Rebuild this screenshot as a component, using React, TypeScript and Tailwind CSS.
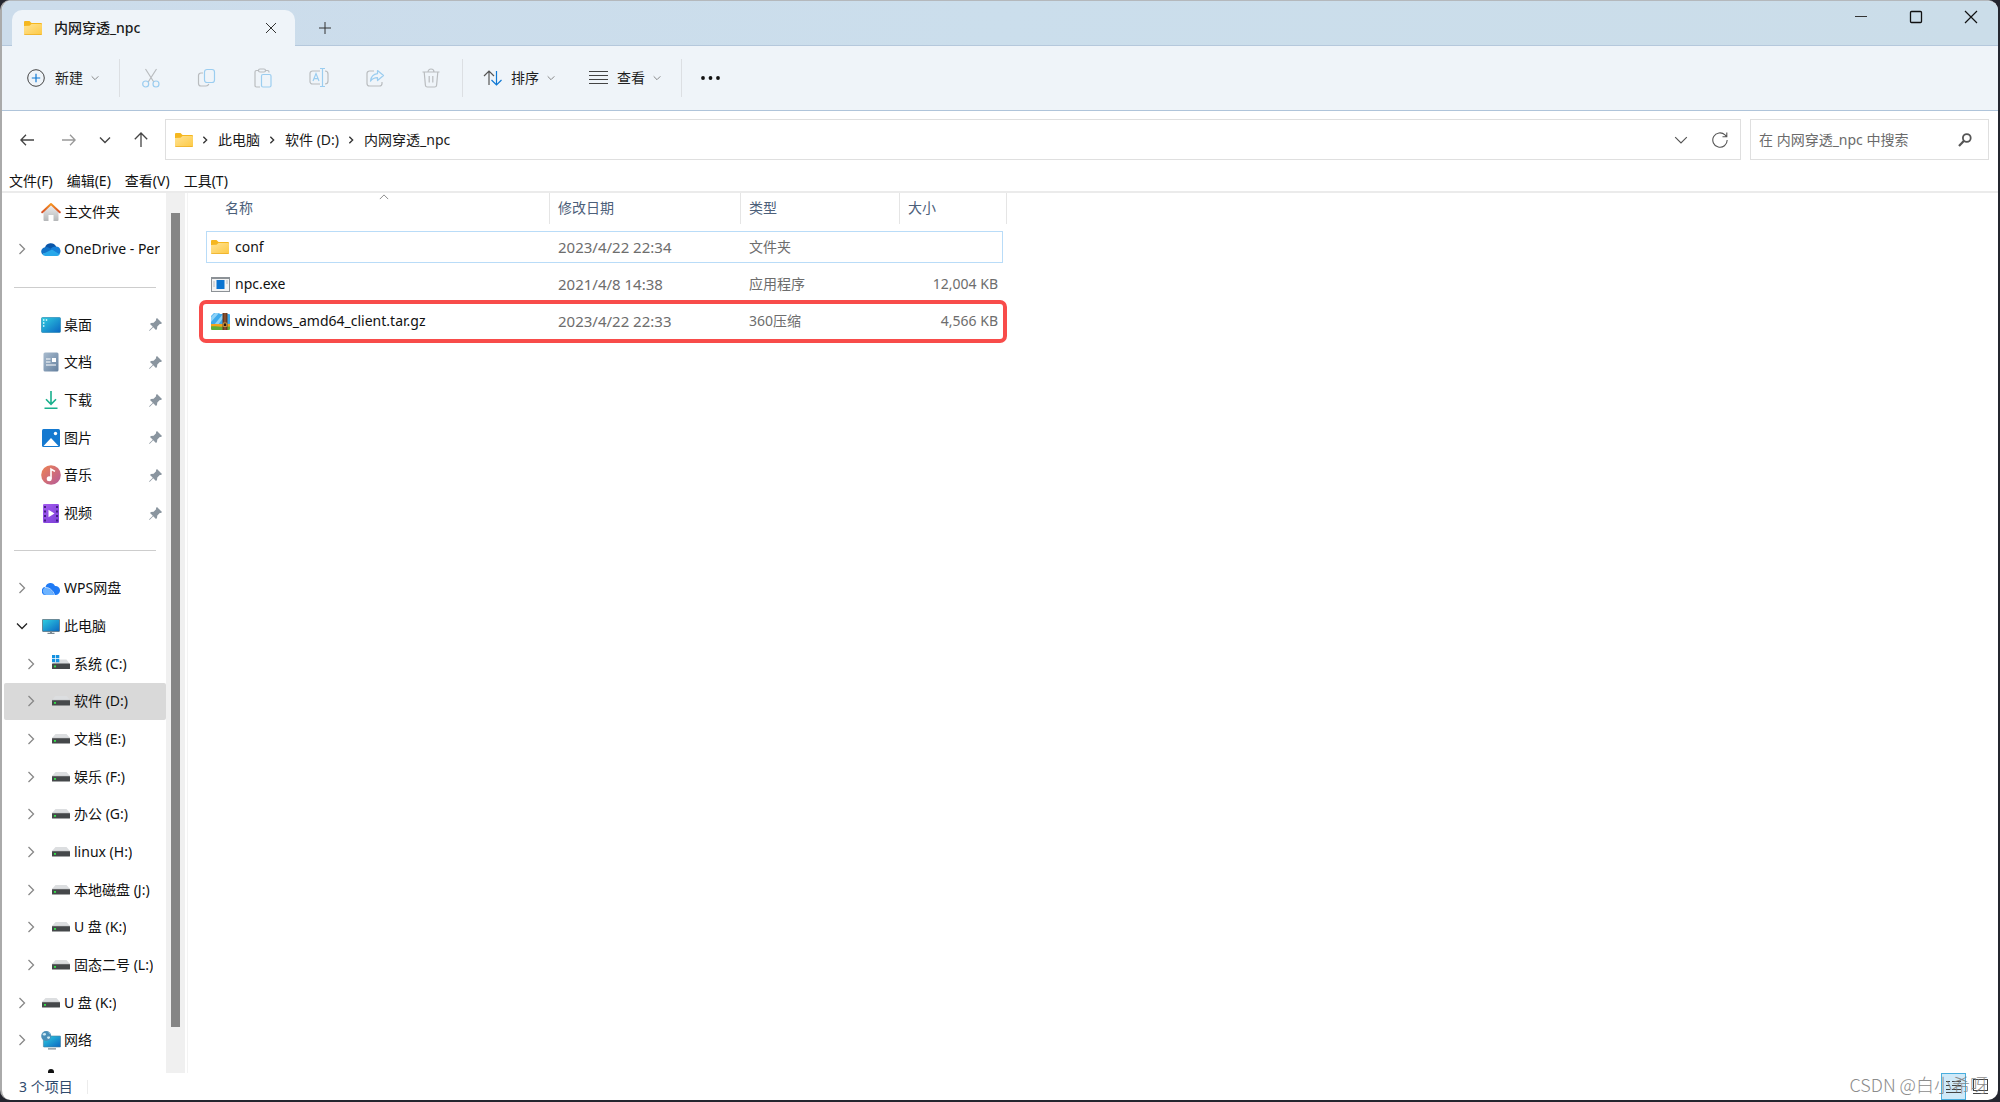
import React from 'react';

type IconType = React.ComponentType<{ className?: string }>;

const FolderIcon: IconType = ({ className }) => (
    <svg viewBox="0 0 18 14" className={className || 'w-[18px] h-[14px] shrink-0'}>
        <defs>
            <linearGradient id="folder" x1="0" y1="0" x2="1" y2="1">
                <stop offset="0" stopColor="#ffe394" />
                <stop offset="1" stopColor="#fdc944" />
            </linearGradient>
        </defs>
        <path d="M0 1a1 1 0 0 1 1-1h4.500l2 2H17a1 1 0 0 1 1 1v9H0z" fill="#f5b71f" />
        <path d="M0 5l5.500-.2 2-1.800H17a1 1 0 0 1 1 1v9a1 1 0 0 1-1 1H1a1 1 0 0 1-1-1z" fill="url(#folder)" />
        <path d="M.3 13.600h17.400" stroke="#e9a91b" strokeWidth=".7" />
    </svg>
);

const HomeIcon: IconType = () => (
    <svg viewBox="0 0 20 20" className="w-5 h-5">
        <defs>
            <linearGradient id="wall" x1="0" y1="0" x2="0" y2="1">
                <stop offset="0" stopColor="#f0f0f0" />
                <stop offset="1" stopColor="#b4b6b8" />
            </linearGradient>
            <linearGradient id="roof" x1="0" y1="0" x2="0" y2="1">
                <stop offset="0" stopColor="#f7941e" />
                <stop offset="1" stopColor="#d6502a" />
            </linearGradient>
        </defs>
        <path d="M2.500 9.500L10 2.800l7.500 6.700V18a1 1 0 0 1-1 1H12.500v-6h-5v6h-4a1 1 0 0 1-1-1z" fill="url(#wall)" />
        <path d="M1.200 10.300L10 2l8.800 8.300" fill="none" stroke="url(#roof)" strokeWidth="2" strokeLinecap="round" strokeLinejoin="round" />
    </svg>
);

const OneDriveIcon: IconType = () => (
    <svg viewBox="0 0 20 14" className="w-5 h-[14px]">
        <path d="M4 5.500A6 6 0 0 1 15 4.300a5 5 0 0 1-1 4L4 12A4 4 0 0 1 4 5.500z" fill="#0a55a8" />
        <path d="M15 4.500a4.600 4.600 0 0 1 2.500 8.400L9 7.500a7 7 0 0 1 6-3z" fill="#1680d8" />
        <path d="M4.200 5.200a4.300 4.300 0 0 0-3 7L12 8 8 5.700a6 6 0 0 0-3.800-.5z" fill="#1273c8" />
        <path d="M1.200 12.200a4 4 0 0 0 3.300 1.700h11.700a3.600 3.600 0 0 0 2.600-1.400L11 7.400z" fill="#28a8ea" />
    </svg>
);

const DesktopIcon: IconType = () => (
    <svg viewBox="0 0 20 16" className="w-5 h-4">
        <defs>
            <linearGradient id="screen" x1="0" y1="0" x2="1" y2="1">
                <stop offset="0" stopColor="#30cfe0" />
                <stop offset="1" stopColor="#0a66c2" />
            </linearGradient>
        </defs>
        <rect x=".5" y=".5" width="19" height="15" rx="1" fill="url(#screen)" stroke="#1b7fae" strokeWidth=".6" />
        <path d="M2 3h1.400M2 6h1.400M4.800 3h1.400M2 9h1.400" stroke="#e9fbff" strokeWidth="1.300" />
    </svg>
);

const DocumentIcon: IconType = () => (
    <svg viewBox="0 0 16 20" className="w-4 h-5">
        <defs>
            <linearGradient id="doc" x1="0" y1="0" x2="1" y2="1">
                <stop offset="0" stopColor="#a9bccf" />
                <stop offset="1" stopColor="#64809e" />
            </linearGradient>
        </defs>
        <rect x=".5" y=".5" width="15" height="19" rx="1.500" fill="url(#doc)" />
        <path d="M3 7h4.500M3 10h4.500M3 13h10" stroke="#fff" strokeWidth="1.200" />
        <rect x="9" y="6" width="4" height="4" fill="#fff" />
    </svg>
);

const DownloadIcon: IconType = () => (
    <svg viewBox="0 0 14 18" className="w-[14px] h-[18px]" fill="none" stroke="#18b08d" strokeWidth="1.600">
        <path d="M7 0v13M2 8.300l5 5 5-5M.500 17.200h13" />
    </svg>
);

const PictureIcon: IconType = () => (
    <svg viewBox="0 0 18 18" className="w-[18px] h-[18px]">
        <rect width="18" height="18" rx="1.500" fill="#1479d0" />
        <path d="M1.500 17L9 9l7.500 8z" fill="#fff" />
        <circle cx="13.500" cy="4.500" r="1.700" fill="#fff" />
    </svg>
);

const MusicIcon: IconType = () => (
    <svg viewBox="0 0 20 20" className="w-5 h-5">
        <defs>
            <linearGradient id="music" x1="0" y1="0" x2="1" y2="1">
                <stop offset="0" stopColor="#ef8350" />
                <stop offset="1" stopColor="#b45a9c" />
            </linearGradient>
        </defs>
        <circle cx="10" cy="10" r="9.800" fill="url(#music)" />
        <circle cx="8.200" cy="13.700" r="2.500" fill="#fff" />
        <path d="M10 13.700V4.200l4 2.200" fill="none" stroke="#fff" strokeWidth="1.600" />
    </svg>
);

const VideoIcon: IconType = () => (
    <svg viewBox="0 0 16 19" className="w-4 h-[19px]">
        <defs>
            <linearGradient id="video" x1="0" y1="0" x2="1" y2="1">
                <stop offset="0" stopColor="#a55cf0" />
                <stop offset="1" stopColor="#7a3ed6" />
            </linearGradient>
        </defs>
        <rect width="16" height="19" rx="1.200" fill="url(#video)" />
        <path d="M2 2v16M14 2v16" stroke="#3a1a78" strokeWidth="1.800" strokeDasharray="2 2.500" />
        <path d="M5.500 5.800l6 3.700-6 3.700z" fill="#fff" />
    </svg>
);

const WpsCloudIcon: IconType = () => (
    <svg viewBox="0 0 18 13" className="w-[18px] h-[13px]">
        <path d="M3.500 5A5 5 0 0 1 13 4a4.500 4.500 0 0 1 1 9H4A4 4 0 0 1 3.500 5z" fill="#1f7af5" />
        <path d="M3 5.500A4 4 0 0 0 4 13h8C10.500 9 7 5.500 3 5.500z" fill="#6db3ff" />
        <path d="M3 5.500C6.500 5 11 8 12.500 13" fill="none" stroke="#e4f1ff" strokeWidth=".8" />
    </svg>
);

const ComputerIcon: IconType = () => (
    <svg viewBox="0 0 18 15" className="w-[18px] h-[15px]">
        <rect x=".4" y=".4" width="17.200" height="12" rx=".6" fill="url(#screen)" stroke="#5a6b76" strokeWidth=".8" />
        <path d="M8 12.500h2v1.300H8zM5.500 13.800h7V15h-7z" fill="#7c8a93" />
    </svg>
);

const DriveIcon: IconType = () => (
    <svg viewBox="0 0 18 10" className="w-[18px] h-[10px]">
        <path d="M3.500 0h11L18 4H0z" fill="#dcdee0" />
        <rect y="4" width="18" height="5.600" rx=".5" fill="#45484a" />
        <path d="M0 4.400h18" stroke="#77797b" strokeWidth=".7" />
        <rect x="2" y="6" width="2" height="1.800" fill="#35e04a" />
    </svg>
);

const SystemDriveIcon: IconType = () => (
    <svg viewBox="0 0 18 14" className="w-[18px] h-[14px] mb-1">
        <path d="M8 4.500h6.500L18 9H0z" fill="#dcdee0" />
        <rect y="8.500" width="18" height="5.500" rx=".5" fill="#45484a" />
        <rect x="2" y="10.500" width="2" height="1.800" fill="#35e04a" />
        <path d="M0 0h3.300v3.300H0zM4 0h3.300v3.300H4zM0 4h3.300v3.300H0zM4 4h3.300v3.300H4z" fill="#1591e0" />
    </svg>
);

const NetworkIcon: IconType = () => (
    <svg viewBox="0 0 20 19" className="w-5 h-[19px]">
        <rect x="2.400" y="5" width="17.200" height="11" rx=".6" fill="url(#screen)" stroke="#4c7f9a" strokeWidth=".6" />
        <path d="M7 17.300h8v1.200H7z" fill="#7c8a93" />
        <circle cx="5.200" cy="5" r="5" fill="#4a8fb8" />
        <path d="M1.500 3c2-2 4-1 3.500.5S2 5 1.500 3zM6 6c2-.8 3.500-.4 3 .8S6.500 9 6 6zM7 1c1.500.4 2 1.500 2.500 2.500" fill="#cfe9f2" />
    </svg>
);

const ExeIcon: IconType = () => (
    <svg viewBox="0 0 19 15" className="w-[19px] h-[15px] shrink-0">
        <rect x=".5" y=".5" width="18" height="14" fill="#f3f3f3" stroke="#8c9196" />
        <path d="M0 1h19" stroke="#8c9196" strokeWidth="2" />
        <path d="M2 5h2M2 7h2M2 9h2M15 4h2M15 6h2" stroke="#a5adb5" strokeWidth=".8" />
        <rect x="5.500" y="3" width="8" height="9" fill="#0a74d1" />
    </svg>
);

const ArchiveIcon: IconType = () => (
    <svg viewBox="0 0 19 17" className="w-[19px] h-[17px] shrink-0">
        <path d="M0 3l3-3h5l1 1h9a1 1 0 0 1 1 1v10H0z" fill="#3da9ec" />
        <path d="M0 4l4-4h4L0 9zM3 12L12 1h3L7 12z" fill="#8ed2f7" />
        <path d="M0 11h19v3H0z" fill="#f5a31d" />
        <path d="M0 13.500c4-1 8 1 19 0V16a1 1 0 0 1-1 1H1a1 1 0 0 1-1-1z" fill="#5fae3a" />
        <path d="M11.500 0h5v17h-5z" fill="#6b3a20" />
        <path d="M14 0v17" stroke="#a0623a" />
        <path d="M12.300 10h3.400v3.500h-3.400z" fill="#2d1a10" stroke="#e2b04a" strokeWidth=".8" />
    </svg>
);

const PinIcon: IconType = () => (
    <svg viewBox="0 0 13 13" className="w-[13px] h-[13px]" fill="#8a959f">
        <path d="M8 0l5 5-1 1-1.200-.1L8.300 8.400 8 11l-1 1-2.800-2.800L.8 12.800H.2v-.6L3.800 8.800 1 6l1-1 2.600-.2 2.500-2.600L7 1z" />
    </svg>
);

interface ChevronProps {
    dir: 'up' | 'down' | 'right';
    className: string;
    width?: number;
}

function Chevron({ dir, className, width = 1 }: ChevronProps) {
    const paths = { up: 'M1 8.500l5-5 5 5', down: 'M1 3.500l5 5 5-5', right: 'M3.500 1l5 5-5 5' };
    return (
        <svg viewBox="0 0 12 12" className={className} fill="none" stroke="currentColor" strokeWidth={width}>
            <path d={paths[dir]} />
        </svg>
    );
}

const Divider = () => <div className="w-px h-[38px] bg-[#dcdfe3]" />;

// Toolbar glyphs share a 20px box; grey is the shape, blue is the accent
const GREY = '#b9bcbf';
const BLUE = '#9bcdf0';

const TOOLS = [
    {
        label: '剪切',
        art: (
            <>
                <path d="M4.500 1l8.300 13M15.500 1L7.200 14" stroke={GREY} />
                <circle cx="4.700" cy="16" r="3" stroke={BLUE} />
                <circle cx="15" cy="16" r="3" stroke={BLUE} />
            </>
        )
    },
    {
        label: '复制',
        art: (
            <>
                <path d="M6 5H4a2.500 2.500 0 0 0-2.500 2.500v8A2.500 2.500 0 0 0 4 18h5a3 3 0 0 0 2.800-2" stroke={GREY} />
                <rect x="7.500" y="1.500" width="10" height="13" rx="2.500" stroke={BLUE} />
            </>
        )
    },
    {
        label: '粘贴',
        art: (
            <>
                <path d="M6 2.500H3.500A1.500 1.500 0 0 0 2 4v13.500A1.500 1.500 0 0 0 3.500 19H7M12 2.500h2.500A1.500 1.500 0 0 1 16 4v.5" stroke={GREY} />
                <rect x="5.500" y="1" width="7" height="3" rx="1.500" stroke={GREY} />
                <rect x="8.500" y="6.500" width="9.500" height="12.500" rx="1.500" stroke={BLUE} />
            </>
        )
    },
    {
        label: '重命名',
        art: (
            <>
                <path d="M11 3H3.500A2.500 2.500 0 0 0 1 5.500v8A2.500 2.500 0 0 0 3.500 16H11M16 3a3 3 0 0 1 3 3v7a3 3 0 0 1-3 3" stroke={GREY} />
                <path d="M4 13l3-7.500L10 13M5 10.700h4M11 .5h5M13.500 .5v18M11 18.500h5" stroke={BLUE} />
            </>
        )
    },
    {
        label: '共享',
        art: (
            <>
                <path d="M9 3H4.500A2.500 2.500 0 0 0 2 5.500v10A2.500 2.500 0 0 0 4.500 18h10a2.500 2.500 0 0 0 2.500-2.500V14" stroke={GREY} />
                <path d="M12.500 2.500l6 5-6 5V9.700c-3.500 0-5.200 1-7 3.500.4-4 2.500-7 7-7.500z" stroke={BLUE} strokeLinejoin="round" />
            </>
        )
    },
    {
        label: '删除',
        art: (
            <path d="M1.500 4h17M7 4a3 3 0 0 1 6 0M3.200 4l1.200 13.200A2 2 0 0 0 6.400 19h7.200a2 2 0 0 0 2-1.800L16.800 4M8.200 8v6.500M11.800 8v6.500" stroke={GREY} />
        )
    }
];

interface NavEntry {
    label?: string;
    icon?: IconType;
    expand?: 'right' | 'down';
    child?: boolean;
    pinned?: boolean;
    selected?: boolean;
}

const NAV: NavEntry[] = [
    { label: '主文件夹', icon: HomeIcon },
    { label: 'OneDrive - Per', icon: OneDriveIcon, expand: 'right' },
    {},
    { label: '桌面', icon: DesktopIcon, pinned: true },
    { label: '文档', icon: DocumentIcon, pinned: true },
    { label: '下载', icon: DownloadIcon, pinned: true },
    { label: '图片', icon: PictureIcon, pinned: true },
    { label: '音乐', icon: MusicIcon, pinned: true },
    { label: '视频', icon: VideoIcon, pinned: true },
    {},
    { label: 'WPS网盘', icon: WpsCloudIcon, expand: 'right' },
    { label: '此电脑', icon: ComputerIcon, expand: 'down' },
    { label: '系统 (C:)', icon: SystemDriveIcon, expand: 'right', child: true },
    { label: '软件 (D:)', icon: DriveIcon, expand: 'right', child: true, selected: true },
    { label: '文档 (E:)', icon: DriveIcon, expand: 'right', child: true },
    { label: '娱乐 (F:)', icon: DriveIcon, expand: 'right', child: true },
    { label: '办公 (G:)', icon: DriveIcon, expand: 'right', child: true },
    { label: 'linux (H:)', icon: DriveIcon, expand: 'right', child: true },
    { label: '本地磁盘 (J:)', icon: DriveIcon, expand: 'right', child: true },
    { label: 'U 盘 (K:)', icon: DriveIcon, expand: 'right', child: true },
    { label: '固态二号 (L:)', icon: DriveIcon, expand: 'right', child: true },
    { label: 'U 盘 (K:)', icon: DriveIcon, expand: 'right' },
    { label: '网络', icon: NetworkIcon, expand: 'right' }
];

const FILES = [
    { name: 'conf', icon: FolderIcon, date: '2023/4/22 22:34', type: '文件夹', size: '', focused: true },
    { name: 'npc.exe', icon: ExeIcon, date: '2021/4/8 14:38', type: '应用程序', size: '12,004 KB' },
    { name: 'windows_amd64_client.tar.gz', icon: ArchiveIcon, date: '2023/4/22 22:33', type: '360压缩', size: '4,566 KB', marked: true }
];

function TitleBar() {
    return (
        <header className="flex justify-between h-[45px] border-b border-[#b5c8dc] bg-linear-to-r from-[#ccdceb] via-[#cbdeec] to-[#cbdde9]">
            <div className="flex pl-[10px]">
                <div className="flex items-center h-9 mt-[9px] w-[283px] pl-3 pr-[18px] rounded-t-[10px] bg-[#eff4f9]">
                    <FolderIcon />
                    <span className="ml-3 mr-auto text-[#1a1a1a] font-medium">内网穿透_npc</span>
                    <button aria-label="关闭标签页">
                        <svg viewBox="0 0 12 12" className="w-3 h-3" stroke="#333" fill="none">
                            <path d="M1 1l10 10M11 1L1 11" />
                        </svg>
                    </button>
                </div>
                <button aria-label="新建标签页" className="self-center ml-6 mt-[9px]">
                    <svg viewBox="0 0 12 12" className="w-3 h-3" stroke="#333">
                        <path d="M6 0v12M0 6h12" />
                    </svg>
                </button>
            </div>
            <div className="flex gap-[41px] h-8 pr-5 items-center">
                <button aria-label="最小化">
                    <svg viewBox="0 0 14 14" className="w-[14px] h-[14px]" stroke="#333" fill="none">
                        <path d="M1 6.500h12" />
                    </svg>
                </button>
                <button aria-label="最大化">
                    <svg viewBox="0 0 14 14" className="w-[14px] h-[14px]" stroke="#111" fill="none" strokeWidth="1.300">
                        <rect x="1.500" y="1.500" width="11" height="11" rx="1" />
                    </svg>
                </button>
                <button aria-label="关闭">
                    <svg viewBox="0 0 14 14" className="w-[14px] h-[14px]" stroke="#111" fill="none" strokeWidth="1.200">
                        <path d="M1 1l12 12M13 1L1 13" />
                    </svg>
                </button>
            </div>
        </header>
    );
}

function Toolbar() {
    return (
        <div className="flex items-center h-[65px] pl-[25px] border-b border-[#afc4da] bg-[#eff4f9] text-[#1f1f1f]">
            <button className="flex items-center">
                <svg viewBox="0 0 18 18" className="w-[18px] h-[18px]" fill="none">
                    <circle cx="9" cy="9" r="8.300" stroke="#444" />
                    <path d="M9 4.800v8.400M4.800 9h8.400" stroke="#0f78d4" strokeWidth="1.200" />
                </svg>
                <span className="ml-[10px] mr-2">新建</span>
                <Chevron dir="down" className="w-2 h-2 text-[#777]" width={1.3} />
            </button>
            <div className="ml-5"><Divider /></div>
            <div className="flex gap-9 mx-[21px]">
                {TOOLS.map((tool) => (
                    <button key={tool.label} aria-label={tool.label} disabled>
                        <svg viewBox="0 0 20 20" className="w-5 h-5" fill="none" strokeWidth="1.200">
                            {tool.art}
                        </svg>
                    </button>
                ))}
            </div>
            <Divider />
            <button className="flex items-center ml-5">
                <svg viewBox="0 0 20 16" className="w-5 h-4" fill="none" strokeWidth="1.200">
                    <path d="M6 15V1.200M1 6l5-5 5 5" stroke="#555" />
                    <path d="M13.500 1v13.800M8.500 10l5 5 5-5" stroke="#0f78d4" />
                </svg>
                <span className="mx-2">排序</span>
                <Chevron dir="down" className="w-2 h-2 text-[#777]" width={1.3} />
            </button>
            <button className="flex items-center ml-[34px]">
                <svg viewBox="0 0 19 14" className="w-[19px] h-[14px]" stroke="#444">
                    <path d="M0 .5h19M0 4.500h19M0 8.500h19M0 12.500h19" />
                </svg>
                <span className="ml-[9px] mr-2">查看</span>
                <Chevron dir="down" className="w-2 h-2 text-[#777]" width={1.3} />
            </button>
            <div className="ml-5 mr-[19px]"><Divider /></div>
            <button aria-label="更多">
                <svg viewBox="0 0 19 4" className="w-[19px] h-1" fill="#111">
                    <circle cx="2" cy="2" r="1.900" />
                    <circle cx="9.500" cy="2" r="1.900" />
                    <circle cx="17" cy="2" r="1.900" />
                </svg>
            </button>
        </div>
    );
}

function AddressBar() {
    return (
        <div className="flex items-center h-[57px] pl-[18px] pr-[9px]">
            <div className="flex items-center">
                <button aria-label="后退">
                    <svg viewBox="0 0 14 12" className="w-[14px] h-3" fill="none" stroke="#444" strokeWidth="1.300">
                        <path d="M14 6H1M6 .8L.9 6 6 11.200" />
                    </svg>
                </button>
                <button aria-label="前进" className="ml-7">
                    <svg viewBox="0 0 14 12" className="w-[14px] h-3" fill="none" stroke="#999" strokeWidth="1.300">
                        <path d="M0 6h13M8 .8L13.100 6 8 11.200" />
                    </svg>
                </button>
                <button aria-label="最近" className="ml-[23px]">
                    <Chevron dir="down" className="w-3 h-3 text-[#444]" width={1.4} />
                </button>
                <button aria-label="向上" className="ml-[23px]">
                    <svg viewBox="0 0 14 15" className="w-[14px] h-[15px]" fill="none" stroke="#444" strokeWidth="1.300">
                        <path d="M7 15V1M.8 7.200L7 1l6.200 6.200" />
                    </svg>
                </button>
            </div>
            <nav className="flex flex-1 items-center h-[41px] ml-[17px] mr-[9px] pl-[9px] pr-3 border border-[#dfdfdf] text-[#1a1a1a]">
                <FolderIcon />
                {['此电脑', '软件 (D:)', '内网穿透_npc'].map((part) => (
                    <React.Fragment key={part}>
                        <Chevron dir="right" className="w-2 h-2 ml-2 mr-[9px] text-[#333]" width={2} />
                        <a href="#">{part}</a>
                    </React.Fragment>
                ))}
                <button aria-label="展开" className="ml-auto mr-6">
                    <Chevron dir="down" className="w-[14px] h-[14px] text-[#555]" />
                </button>
                <button aria-label="刷新">
                    <svg viewBox="0 0 16 16" className="w-4 h-4" fill="none" stroke="#555" strokeWidth="1.100">
                        <path d="M15.200 8A7.200 7.200 0 1 1 13 2.900L14.600 4.500M14.800 .5v4.200h-4.300" />
                    </svg>
                </button>
            </nav>
            <label className="flex items-center w-[239px] h-[41px] pl-2 pr-4 border border-[#dfdfdf]">
                <input
                    type="text"
                    aria-label="搜索"
                    placeholder="在 内网穿透_npc 中搜索"
                    className="flex-1 min-w-0 outline-none placeholder:text-[#6b6b6b]"
                />
                <svg viewBox="0 0 14 14" className="w-[14px] h-[14px]" fill="none" stroke="#555">
                    <circle cx="8.800" cy="5" r="3.900" strokeWidth="1.800" />
                    <path d="M6 7.800L1 13" strokeWidth="2.200" />
                </svg>
            </label>
        </div>
    );
}

function Sidebar() {
    return (
        <aside className="flex shrink-0 w-[186px] pr-[2px] border-r border-[#f3f3f3]">
            <ul className="flex flex-col flex-1 min-w-0 pl-[2px]">
                {NAV.map((item, idx) => {
                    if (!item.icon) {
                        return (
                            <li key={idx} className="flex flex-1 items-center min-h-0 pl-[10px] pr-[10px]">
                                <hr className="w-full border-[#cdcdcd]" />
                            </li>
                        );
                    }
                    const Icon = item.icon;
                    return (
                        <li key={idx} className="flex flex-1 min-h-0">
                            <button
                                className={`flex items-center w-full min-w-0 rounded-[2px] text-left whitespace-nowrap ${item.child ? 'pl-[21px]' : 'pl-3'} ${item.selected ? 'bg-[#d9d9d9]' : ''}`}
                            >
                                <span className="flex w-3 shrink-0">
                                    {item.expand && (
                                        <Chevron
                                            dir={item.expand}
                                            className={`w-3 h-3 ${item.expand === 'down' ? 'text-[#222]' : 'text-[#888]'}`}
                                            width={1.3}
                                        />
                                    )}
                                </span>
                                <span className={`flex justify-center shrink-0 w-5 mr-[3px] ${item.child ? 'ml-[14px]' : 'ml-[13px]'}`}>
                                    <Icon />
                                </span>
                                <span className="overflow-hidden">{item.label}</span>
                                {item.pinned && <span className="ml-auto mr-1"><PinIcon /></span>}
                            </button>
                        </li>
                    );
                })}
                <li className="h-[14px] pl-10 overflow-hidden">
                    <svg viewBox="0 0 14 14" className="w-[14px] h-[14px]">
                        <circle cx="7" cy="13" r="3" fill="#111" />
                    </svg>
                </li>
            </ul>
            <div className="w-[19px] pt-5 pb-[46px] px-[5px] bg-[#f0f0f0]">
                <div className="h-full bg-[#858585]" />
            </div>
        </aside>
    );
}

function FileTable() {
    const head = 'h-[31px] pl-2 pt-[5px] border-r border-[#e5e5e5]';
    return (
        <table className="table-fixed w-[801px] h-min text-left text-[#6d6d6d]">
            <thead>
            <tr className="h-[38px] align-top text-[#4c607a]">
                <th className="relative w-[344px] p-0 font-normal">
                    <div className="h-[31px] pl-[19px] pt-[5px] border-r border-[#e5e5e5]">名称</div>
                    <Chevron dir="up" className="absolute -top-px left-[173px] w-[10px] h-[10px] text-[#777]" />
                </th>
                <th className="w-[191px] p-0 font-normal"><div className={head}>修改日期</div></th>
                <th className="w-[159px] p-0 font-normal"><div className={head}>类型</div></th>
                <th className="p-0 font-normal"><div className={head}>大小</div></th>
            </tr>
            </thead>
            <tbody>
            {FILES.map((file) => {
                const Icon = file.icon;
                const cell = `flex items-center h-8 border-y ${file.focused ? 'border-[#b9dcf8]' : 'border-transparent'}`;
                return (
                    <tr key={file.name} className="relative h-[37px] align-top">
                        <td className="p-0">
                            <div className={`${cell} border-l pl-1 text-[#111]`}>
                                <span className="flex w-5 mr-1"><Icon /></span>
                                {file.name}
                            </div>
                            {file.marked && (
                                <div className="absolute -top-[5px] -bottom-px -left-[7px] right-0 border-4 border-[#f84c4a] rounded-[7px]" />
                            )}
                        </td>
                        <td className="p-0"><div className={`${cell} pl-2 text-[15px]`}>{file.date}</div></td>
                        <td className="p-0"><div className={`${cell} pl-2`}>{file.type}</div></td>
                        <td className="p-0 pr-1"><div className={`${cell} border-r justify-end pr-1`}>{file.size}</div></td>
                    </tr>
                );
            })}
            </tbody>
        </table>
    );
}

function StatusBar() {
    return (
        <footer className="relative flex items-center justify-between h-[27px] pl-[17px] pr-2 text-[#2f4a6d]">
            <span className="pr-[14px] border-r border-[#ececec] leading-[14px]">3 个项目</span>
            <div className="flex items-center gap-1 h-full">
                <button aria-label="详细信息" className="flex items-center justify-center w-[25px] h-full border border-[#4aaede] bg-[#cfe9f8]">
                    <svg viewBox="0 0 15 14" className="w-[15px] h-[14px]" stroke="#444">
                        <path d="M0 1.500h4M6 1.500h9M0 5.500h4M6 5.500h9M0 9.500h4M6 9.500h9M0 12.500h15" />
                    </svg>
                </button>
                <button aria-label="大图标" className="flex items-center justify-center w-5 h-full">
                    <svg viewBox="0 0 15 15" className="w-[15px] h-[15px]" fill="none" stroke="#444">
                        <rect x=".5" y=".5" width="14" height="11" />
                        <path d="M0 14.500h15" />
                    </svg>
                </button>
            </div>
            <div className="absolute right-[10px] bottom-1 text-[18px] leading-6 font-light text-[#808080] opacity-90 pointer-events-none font-['Noto_Sans_CJK_SC',sans-serif]">
                CSDN @白小希呀
            </div>
        </footer>
    );
}

export default function App() {
    return (
        <div className="h-screen pb-[2px] pr-[2px] bg-[#24262f]">
            <div className="flex flex-col h-full overflow-hidden border-t border-l-2 border-t-[#b4b8bc] border-l-[#aaaaaa] rounded-[10px] bg-white text-[14px] leading-5 text-[#111] font-['Noto_Sans','Noto_Sans_CJK_SC',sans-serif]">
                <TitleBar />
                <Toolbar />
                <AddressBar />
                <div className="flex gap-[14px] h-[25px] pt-[2px] pl-[7px] border-b-2 border-[#ebebeb]">
                    {['文件(F)', '编辑(E)', '查看(V)', '工具(T)'].map((label) => (
                        <button key={label} className="leading-5">{label}</button>
                    ))}
                </div>
                <main className="flex flex-1 min-h-0">
                    <Sidebar />
                    <div className="flex-1 pl-[18px]">
                        <FileTable />
                    </div>
                </main>
                <StatusBar />
            </div>
        </div>
    );
}
